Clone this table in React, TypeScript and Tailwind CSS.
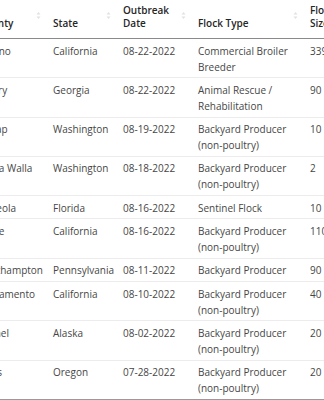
import React from "react";

type Row = { county: string; state: string; date: string; type: string[]; size: string };

const rows: Row[] = [
  { county: "Fresno", state: "California", date: "08-22-2022", type: ["Commercial Broiler", "Breeder"], size: "339,300" },
  { county: "Henry", state: "Georgia", date: "08-22-2022", type: ["Animal Rescue /", "Rehabilitation"], size: "90" },
  { county: "Kitsap", state: "Washington", date: "08-19-2022", type: ["Backyard Producer", "(non-poultry)"], size: "10" },
  { county: "Walla Walla", state: "Washington", date: "08-18-2022", type: ["Backyard Producer", "(non-poultry)"], size: "2" },
  { county: "Osceola", state: "Florida", date: "08-16-2022", type: ["Sentinel Flock"], size: "10" },
  { county: "Butte", state: "California", date: "08-16-2022", type: ["Backyard Producer", "(non-poultry)"], size: "110" },
  { county: "Northampton", state: "Pennsylvania", date: "08-11-2022", type: ["Backyard Producer"], size: "90" },
  { county: "Sacramento", state: "California", date: "08-10-2022", type: ["Backyard Producer", "(non-poultry)"], size: "40" },
  { county: "Bethel", state: "Alaska", date: "08-02-2022", type: ["Backyard Producer", "(non-poultry)"], size: "20" },
  { county: "Coos", state: "Oregon", date: "07-28-2022", type: ["Backyard Producer", "(non-poultry)"], size: "20" },
];

function SortIcon() {
  return (
    <svg className="absolute right-[8px] top-[12px]" width="5" height="7" viewBox="0 0 5 7">
      <path d="M2.5 0 L4.5 2.6 L0.5 2.6 Z" fill="#e2e2e2" />
      <path d="M2.5 7 L4.5 4.4 L0.5 4.4 Z" fill="#e2e2e2" />
    </svg>
  );
}

function Th({ lines }: { lines: string[] }) {
  return (
    <th className="relative align-bottom text-left font-semibold text-[#262626] leading-[13px] pl-[4px] pr-[4px] pt-[4px] pb-[8px] border-b border-[#8a8a8a]">
      {lines.map((l, i) => (
        <div key={i}>{l}</div>
      ))}
      <SortIcon />
    </th>
  );
}

export default function App() {
  return (
    <div className="w-[324px] h-[400px] overflow-hidden bg-white" style={{ fontFamily: '"Open Sans", sans-serif' }}>
      <table className="table-fixed border-collapse ml-[-25px] text-[10px] w-[380px]">
        <colgroup>
          <col className="w-[74px]" />
          <col className="w-[70px]" />
          <col className="w-[75px]" />
          <col className="w-[112px]" />
          <col className="w-[49px]" />
        </colgroup>
        <thead>
          <tr>
            <Th lines={["County"]} />
            <Th lines={["State"]} />
            <Th lines={["Outbreak", "Date"]} />
            <Th lines={["Flock Type"]} />
            <Th lines={["Flock", "Size"]} />
          </tr>
        </thead>
        <tbody>
          {rows.map((r, i) => {
            const last = i === rows.length - 1;
            const cls = `align-top text-left text-[#464646] leading-[16px] pl-[4px] pr-[4px] pt-[3.5px] pb-[2.8px] whitespace-nowrap overflow-visible ${
              last ? "border-b-2 border-[#9a9a9a]" : "border-b border-[#ececec]"
            }`;
            return (
              <tr key={i}>
                <td className={cls}>{r.county}</td>
                <td className={cls}>{r.state}</td>
                <td className={cls}>{r.date}</td>
                <td className={cls}>
                  {r.type.map((t, j) => (
                    <div key={j}>{t}</div>
                  ))}
                </td>
                <td className={cls}>{r.size}</td>
              </tr>
            );
          })}
        </tbody>
      </table>
    </div>
  );
}
